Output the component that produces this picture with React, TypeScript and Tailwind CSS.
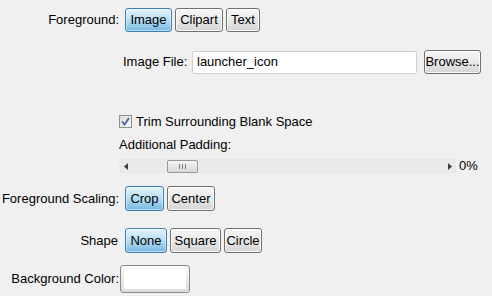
import React from "react";

const font = { fontFamily: '"Liberation Sans", Arial, sans-serif' };

const ToggleButton = ({
  label,
  selected,
  width,
  height = "h-[25px]",
}: {
  label: string;
  selected?: boolean;
  width: string;
  height?: string;
}) => (
  <div
    className={`${width} ${height} flex items-center justify-center rounded-[3px] border text-[13px] text-black ${
      selected
        ? "border-[#3c7fb1] bg-gradient-to-b from-[#e3f3fc] via-[#b6ddf3] to-[#74b9e2] shadow-[inset_0_0_0_1px_rgba(255,255,255,0.45)]"
        : "border-[#707070] bg-gradient-to-b from-[#f6f6f6] via-[#e9e9e9] to-[#d4d4d4] shadow-[inset_0_0_0_1px_rgba(255,255,255,0.8)]"
    }`}
  >
    {label}
  </div>
);

const Label = ({ text, width = "w-[119px]" }: { text: string; width?: string }) => (
  <div className={`${width} shrink-0 text-right text-[13px] text-black`}>{text}</div>
);

export default function App() {
  return (
    <div
      style={font}
      className="w-[492px] h-[296px] overflow-hidden bg-[#f0f0f0] pt-[8px] text-[13px] text-black"
    >
      {/* Foreground */}
      <div className="flex h-[24px] items-center">
        <Label text="Foreground:" />
        <div className="ml-[6px] flex gap-[3px]">
          <ToggleButton label="Image" selected width="w-[47px]" height="h-[24px]" />
          <ToggleButton label="Clipart" width="w-[48px]" height="h-[24px]" />
          <ToggleButton label="Text" width="w-[34px]" height="h-[24px]" />
        </div>
      </div>

      {/* Image File */}
      <div className="mt-[18px] flex h-[24px] items-center pl-[123px]">
        <div className="w-[69px] shrink-0">Image File:</div>
        <div className="flex h-[23px] w-[225px] items-center rounded-[2px] border border-[#cfcfcf] bg-white pl-[4px]">
          launcher_icon
        </div>
        <div className="ml-[7px] flex h-[24px] w-[57px] items-center justify-center rounded-[3px] border border-[#707070] bg-gradient-to-b from-[#f6f6f6] via-[#e9e9e9] to-[#d4d4d4] shadow-[inset_0_0_0_1px_rgba(255,255,255,0.8)]">
          Browse...
        </div>
      </div>

      {/* Trim */}
      <div className="mt-[41px] flex h-[13px] items-center pl-[119px]">
        <div className="flex h-[13px] w-[13px] items-center justify-center border border-[#8f8f8f] bg-gradient-to-br from-[#dcdcdc] to-[#f8f8f8]">
          <svg width="9" height="9" viewBox="0 0 9 9">
            <path d="M1 4.5 L3.5 7.5 L8 1" stroke="#4a5fa8" strokeWidth="1.8" fill="none" />
          </svg>
        </div>
        <div className="ml-[4px] leading-[13px]">Trim Surrounding Blank Space</div>
      </div>

      {/* Additional padding */}
      <div className="mt-[9px] flex h-[16px] items-center pl-[119px]">Additional Padding:</div>

      {/* Slider */}
      <div className="mt-[6px] flex h-[14px] items-center pl-[119px]">
        <div className="flex h-[14px] w-[337px] items-center border-y border-[#e8e8e8] bg-[#eaeaea]">
          <svg className="ml-[5px]" width="5" height="7" viewBox="0 0 5 7">
            <path d="M4 0 L0 3.5 L4 7 Z" fill="#404040" />
          </svg>
          <div className="ml-[38px] flex h-[13px] w-[31px] items-center justify-center rounded-[2px] border border-[#979797] bg-gradient-to-b from-[#f5f5f5] to-[#dadada]">
            <svg width="7" height="5" viewBox="0 0 7 5">
              <path d="M0.5 0 V5 M3.5 0 V5 M6.5 0 V5" stroke="#7a7a7a" strokeWidth="1" />
            </svg>
          </div>
          <div className="flex-1" />
          <svg className="mr-[4px]" width="5" height="7" viewBox="0 0 5 7">
            <path d="M1 0 L5 3.5 L1 7 Z" fill="#404040" />
          </svg>
        </div>
        <div className="ml-[3px]">0%</div>
      </div>

      {/* Foreground Scaling */}
      <div className="mt-[13px] flex h-[25px] items-center">
        <Label text="Foreground Scaling:" />
        <div className="ml-[6px] flex gap-[3px]">
          <ToggleButton label="Crop" selected width="w-[39px]" />
          <ToggleButton label="Center" width="w-[48px]" />
        </div>
      </div>

      {/* Shape */}
      <div className="mt-[17px] flex h-[25px] items-center">
        <Label text="Shape" width="w-[118px]" />
        <div className="ml-[7px] flex gap-[3px]">
          <ToggleButton label="None" selected width="w-[42px]" />
          <ToggleButton label="Square" width="w-[51px]" />
          <ToggleButton label="Circle" width="w-[38px]" />
        </div>
      </div>

      {/* Background Color */}
      <div className="mt-[12px] flex h-[28px] items-center">
        <Label text="Background Color:" />
        <div className="ml-[1px] h-[28px] w-[70px] rounded-[3px] border border-[#8a8a8a] bg-gradient-to-b from-[#fafafa] to-[#dcdcdc] p-[3px]">
          <div className="h-full w-full bg-white" />
        </div>
      </div>
    </div>
  );
}
